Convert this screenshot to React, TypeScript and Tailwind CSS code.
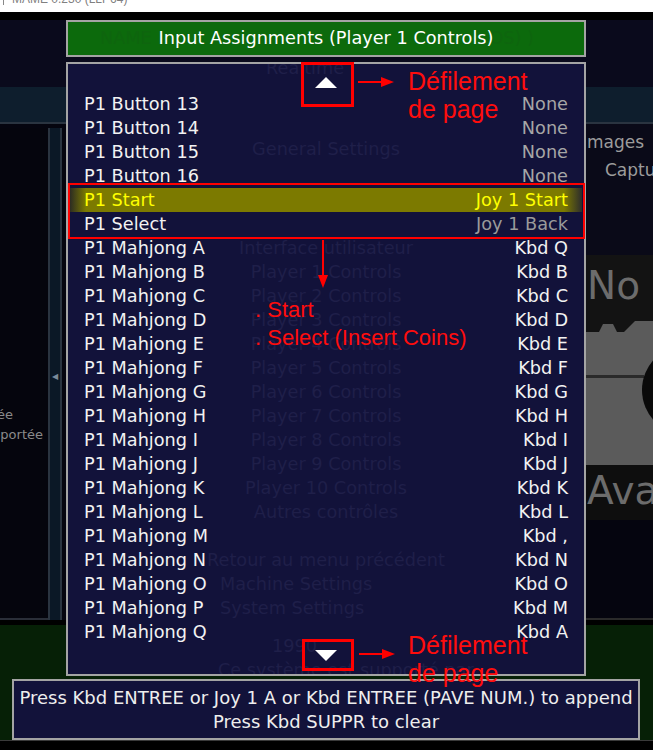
import React from 'react'

type Kind = 'none' | 'sel' | 'dim' | 'norm'

const rows: [string, string, Kind][] = [
  ['P1 Button 13', 'None', 'none'],
  ['P1 Button 14', 'None', 'none'],
  ['P1 Button 15', 'None', 'none'],
  ['P1 Button 16', 'None', 'none'],
  ['P1 Start', 'Joy 1 Start', 'sel'],
  ['P1 Select', 'Joy 1 Back', 'dim'],
  ['P1 Mahjong A', 'Kbd Q', 'norm'],
  ['P1 Mahjong B', 'Kbd B', 'norm'],
  ['P1 Mahjong C', 'Kbd C', 'norm'],
  ['P1 Mahjong D', 'Kbd D', 'norm'],
  ['P1 Mahjong E', 'Kbd E', 'norm'],
  ['P1 Mahjong F', 'Kbd F', 'norm'],
  ['P1 Mahjong G', 'Kbd G', 'norm'],
  ['P1 Mahjong H', 'Kbd H', 'norm'],
  ['P1 Mahjong I', 'Kbd I', 'norm'],
  ['P1 Mahjong J', 'Kbd J', 'norm'],
  ['P1 Mahjong K', 'Kbd K', 'norm'],
  ['P1 Mahjong L', 'Kbd L', 'norm'],
  ['P1 Mahjong M', 'Kbd ,', 'norm'],
  ['P1 Mahjong N', 'Kbd N', 'norm'],
  ['P1 Mahjong O', 'Kbd O', 'norm'],
  ['P1 Mahjong P', 'Kbd M', 'norm'],
  ['P1 Mahjong Q', 'Kbd A', 'norm'],
]

const players = ['1', '2', '3', '4', '5', '6', '7', '8', '9', '10']

function Row({ name, value, kind }: { name: string; value: string; kind: Kind }) {
  const sel = kind === 'sel'
  return (
    <div
      className={
        sel
          ? 'mx-[2px] h-[24px] px-[14px] flex items-center justify-between bg-[linear-gradient(to_right,#2c2c22_0px,#7c7a00_16px,#7c7a00_calc(100%_-_18px),#2c2c2c_100%)] text-[#ffff00]'
          : 'mx-[2px] h-[24px] px-[14px] flex items-center justify-between text-[#f2f2f2]'
      }
    >
      <span>{name}</span>
      <span
        className={
          kind === 'none' ? 'text-[#a6a6a6]' : kind === 'dim' ? 'text-[#9a9a9a]' : sel ? 'text-[#ffff00]' : 'text-[#f2f2f2]'
        }
      >
        {value}
      </span>
    </div>
  )
}

function RedArrowRight() {
  return (
    <svg width="36" height="12" viewBox="0 0 36 12">
      <line x1="0" y1="6" x2="26" y2="6" stroke="#ff0000" strokeWidth="2" />
      <polygon points="23,1 36,6 23,11" fill="#ff0000" />
    </svg>
  )
}

export default function App() {
  return (
    <div className="relative w-[653px] h-[750px] overflow-hidden bg-[#05050f] font-['DejaVu_Sans',sans-serif]">
      {/* fenêtre : barre de titre coupée */}
      <div className="h-[12px] bg-white overflow-hidden flex">
        <div className="w-[1px] h-[5px] bg-[#888] ml-[3px]" />
        <div className="-mt-[8px] ml-[8px] text-[12px] leading-[14px] text-[#808080] font-['Liberation_Sans',sans-serif] whitespace-nowrap">
          MAME 0.230 (LLP64)
        </div>
      </div>
      <div className="h-[8px] bg-black" />
      <div className="h-[67px] bg-[#0a0a1c]" />
      <div className="h-[37px] bg-[#0e1e2d] border-b-2 border-[#2a3440]" />

      {/* arrière-plan : panneaux gauche / droite */}
      <div className="flex h-[496px]">
        <div className="w-[62px] pt-[4px] flex">
          <div className="w-[48px] h-full bg-[#05050d] border-b-2 border-[#2a2e38] overflow-hidden pt-[277px] text-[13px] leading-[20px] text-[#8a8a8a]">
            <div className="w-[13px] flex justify-end whitespace-nowrap">Clonée</div>
            <div className="w-[43px] flex justify-end whitespace-nowrap">Non supportée</div>
          </div>
          <div className="w-[14px] h-full bg-[#0b1826] border-x-2 border-[#2a3440] pt-[244px] flex justify-center">
            <span className="text-[8px] leading-[10px] text-[#7a8a9a]">◀</span>
          </div>
        </div>
        <div className="flex-1 bg-[#05050f]" />
        <div className="w-[67px] flex flex-col">
          <div className="h-[131px] bg-[#0a0a18] pt-[6px] text-[17px] leading-[24px] text-[#9c9c9c] whitespace-nowrap overflow-hidden">
            <div className="pl-[1px]">mages</div>
            <div className="pl-[19px] mt-[4px]">Captur</div>
          </div>
          <div className="h-[63px] bg-[#131313] pt-[8px] pl-[1px] text-[39px] leading-[46px] text-[#6c6c6c] whitespace-nowrap overflow-hidden">
            No i
          </div>
          <svg width="67" height="147" viewBox="0 0 67 147" className="block">
            <rect x="0" y="0" width="67" height="147" fill="#131313" />
            <rect x="0" y="14" width="67" height="133" fill="#5b5b5b" />
            <polygon points="13,14 17,6 27,6 31,14" fill="#5b5b5b" />
            <polygon points="38,14 49,3 67,3 67,14" fill="#5b5b5b" />
            <rect x="0" y="57" width="58" height="3" fill="#2a2a2a" />
            <circle cx="101" cy="72" r="45" fill="#0a0a0a" />
          </svg>
          <div className="h-[55px] bg-[#0e0e0e] pt-[3px] pl-[1px] text-[39px] leading-[46px] text-[#6c6c6c] whitespace-nowrap overflow-hidden">
            Ava
          </div>
          <div className="flex-1 bg-[#05050f] border-b-2 border-[#2a2a2a]" />
        </div>
      </div>
      <div className="h-[5px] bg-black" />
      <div className="h-[115px] bg-[#062006]" />
      <div className="h-[10px] bg-black border-t border-[#3a3a3a]" />

      {/* titre du menu */}
      <div className="absolute left-[66px] top-[20px] w-[520px] h-[37px] bg-[#0c6a0c] border-2 border-[#a4a4a4] flex items-center justify-center text-[17.7px] text-white">
        <div className="absolute inset-0 flex items-center justify-between px-[32px] text-[#0e650e]">
          <span>NAME</span>
          <span className="pr-[18px]">OS) )</span>
        </div>
        <span className="relative">Input Assignments (Player 1 Controls)</span>
      </div>

      {/* liste des entrées */}
      <div className="absolute left-[66px] top-[62px] w-[520px] h-[614px] bg-[#12123a] border-2 border-[#a4a4a4] text-[17.7px] leading-[24px]">
        <div className="absolute inset-0 overflow-hidden text-[#1f1f49] whitespace-nowrap">
          <div className="-mt-[8px] h-[24px] pl-[198px]">Realtime</div>
          <div className="mt-[57px] h-[24px] text-center">General Settings</div>
          <div className="mt-[75px] h-[24px] text-center">Interface utilisateur</div>
          {players.map(p => (
            <div key={p} className="h-[24px] text-center">Player {p} Controls</div>
          ))}
          <div className="h-[24px] text-center">Autres contrôles</div>
          <div className="mt-[24px] h-[24px] text-center">Retour au menu précédent</div>
          <div className="h-[24px] pl-[152px]">Machine Settings</div>
          <div className="h-[24px] pl-[152px]">System Settings</div>
          <div className="mt-[14px] h-[24px] pl-[204px]">1990</div>
          <div className="h-[24px] pl-[150px]">Ce système est supporté par</div>
        </div>
        <div className="relative">
          <div className="h-[28px] flex justify-center pt-[13px]">
            <svg width="22" height="11" viewBox="0 0 22 11" className="block">
              <polygon points="0,11 11,0 22,11" fill="#ffffff" />
            </svg>
          </div>
          {rows.map(([n, v, k]) => (
            <Row key={n} name={n} value={v} kind={k} />
          ))}
          <div className="h-[20px] flex justify-center pt-[6px]">
            <svg width="22" height="11" viewBox="0 0 22 11" className="block">
              <polygon points="0,0 22,0 11,11" fill="#ffffff" />
            </svg>
          </div>
        </div>
      </div>

      {/* aide */}
      <div className="absolute left-[12px] top-[679px] w-[628px] h-[61px] bg-[#12123a] border-2 border-[#a4a4a4] pt-[5px] text-center text-[18px] leading-[24px] text-[#eeeeee] whitespace-nowrap">
        <div>Press Kbd ENTREE or Joy 1 A or Kbd ENTREE (PAVE NUM.) to append</div>
        <div>Press Kbd SUPPR to clear</div>
      </div>

      {/* annotations */}
      <div className="absolute left-[301px] top-[62px] w-[53px] h-[45px] border-[3px] border-[#ff0000]" />
      <div className="absolute left-[358px] top-[76px]">
        <RedArrowRight />
      </div>
      <div className="absolute left-[408px] top-[67px] text-[25px] leading-[28px] text-[#ff0d0d] font-['Liberation_Sans',sans-serif]">
        <div>Défilement</div>
        <div>de page</div>
      </div>

      <div className="absolute left-[68px] top-[183px] w-[517px] h-[56px] border-2 border-[#ff0000]" />
      <svg width="12" height="48" viewBox="0 0 12 48" className="absolute left-[317px] top-[240px]">
        <line x1="6" y1="0" x2="6" y2="38" stroke="#ff0000" strokeWidth="2" />
        <polygon points="1,35 6,48 11,35" fill="#ff0000" />
      </svg>
      <div className="absolute left-[255px] top-[296px] text-[22px] leading-[28px] text-[#ff0d0d] font-['Liberation_Sans',sans-serif] whitespace-nowrap">
        <div>. Start</div>
        <div>. Select (Insert Coins)</div>
      </div>

      <div className="absolute left-[302px] top-[639px] w-[52px] h-[32px] border-[3px] border-[#ff0000]" />
      <div className="absolute left-[359px] top-[648px]">
        <RedArrowRight />
      </div>
      <div className="absolute left-[408px] top-[631px] text-[25px] leading-[28px] text-[#ff0d0d] font-['Liberation_Sans',sans-serif]">
        <div>Défilement</div>
        <div>de page</div>
      </div>
    </div>
  )
}
